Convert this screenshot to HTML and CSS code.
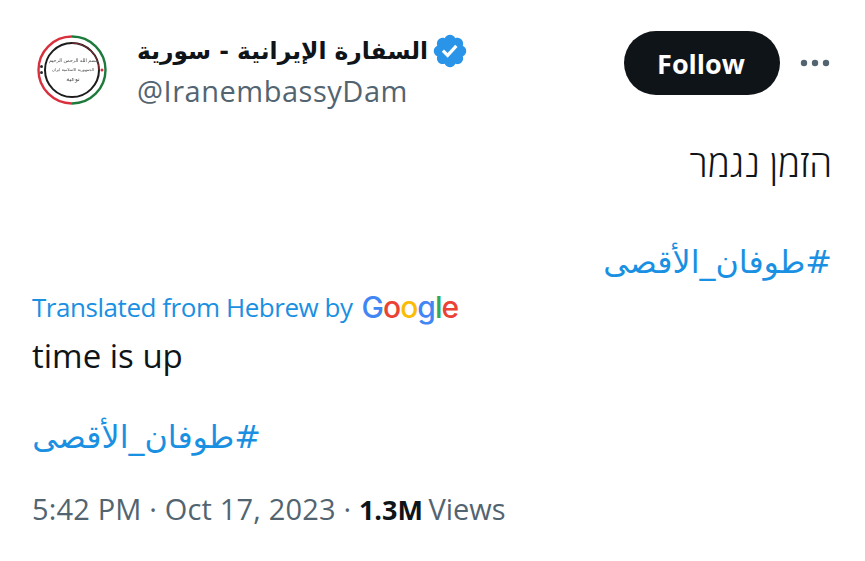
FILE: index.html
```html
<!DOCTYPE html>
<html lang="en">
<head>
<meta charset="utf-8">
<title>Tweet</title>
<link rel="stylesheet" href="styles.css">
</head>
<body>
<main class="tweet">
  <header class="head">
    <svg class="avatar" viewBox="0 0 72 72" aria-hidden="true">
      <circle cx="36" cy="36" r="36" fill="#fff"/>
      <path d="M36 2.500a33.500 33.500 0 0 1 0 67" fill="none" stroke="#1e7a3c" stroke-width="2.400"/>
      <path d="M36 69.500a33.500 33.500 0 0 1 0-67" fill="none" stroke="#d8303c" stroke-width="2.400"/>
      <circle cx="36" cy="36" r="27" fill="none" stroke="#1c1c1c" stroke-width="2"/>
      <path d="M36 9a27 27 0 0 1 27 27" fill="none" stroke="#8a2a30" stroke-width="1"/>
      <g class="seal">
        <text x="37" y="28" font-size="4.800">بسم الله الرحمن الرحيم</text>
        <text x="37" y="37" font-size="4">الجمهورية الاسلامية ايران</text>
        <text x="37" y="47" font-size="6">نوعية</text>
      </g>
      <circle cx="5.500" cy="32.500" r="1.500" fill="#2a2a2a"/>
      <circle cx="5.500" cy="38.500" r="1.500" fill="#2a2a2a"/>
      <circle cx="66" cy="36" r="1.500" fill="#d8303c"/>
    </svg>
    <div class="who">
      <div class="name-row">
        <span class="name" dir="rtl">السفارة الإيرانية - سورية</span>
        <svg class="badge" viewBox="0 0 22 22" aria-hidden="true"><path fill="#2a94e8" d="M20.396 11c-.018-.646-.215-1.275-.57-1.816-.354-.54-.852-.972-1.438-1.246.223-.607.27-1.264.14-1.897-.131-.634-.437-1.218-.882-1.687-.47-.445-1.053-.75-1.687-.882-.633-.13-1.29-.083-1.897.14-.273-.587-.704-1.086-1.245-1.44S11.647 1.62 11 1.604c-.646.017-1.273.213-1.813.568s-.969.854-1.24 1.44c-.608-.223-1.267-.272-1.902-.14-.635.13-1.22.436-1.69.882-.445.47-.749 1.055-.878 1.688-.13.633-.08 1.29.144 1.896-.587.274-1.087.705-1.443 1.245-.356.54-.555 1.17-.574 1.817.02.647.218 1.276.574 1.817.356.54.856.972 1.443 1.245-.224.606-.274 1.263-.144 1.896.13.634.433 1.218.877 1.688.47.443 1.054.747 1.687.878.633.132 1.29.084 1.897-.136.274.586.705 1.084 1.246 1.439.54.354 1.17.551 1.816.569.647-.016 1.276-.213 1.817-.567s.972-.854 1.245-1.44c.604.239 1.266.296 1.903.164.636-.132 1.22-.447 1.68-.907.46-.46.776-1.044.908-1.681s.075-1.299-.165-1.903c.586-.274 1.084-.705 1.439-1.246.354-.54.551-1.17.569-1.816z"/><path fill="#fff" d="M9.662 14.850l-3.429-3.428 1.293-1.302 2.072 2.072 4.400-4.794 1.347 1.246z"/></svg>
      </div>
      <div class="handle">@IranembassyDam</div>
    </div>
    <button class="follow" type="button">Follow</button>
    <svg class="more" viewBox="0 0 30 8" aria-hidden="true"><circle cx="4" cy="4" r="3.200"/><circle cx="15" cy="4" r="3.200"/><circle cx="26" cy="4" r="3.200"/></svg>
  </header>

  <section class="original" dir="rtl">
    <p class="he" lang="he">הזמן נגמר</p>
    <p class="tag" lang="ar">#طوفان_الأقصى</p>
  </section>

  <div class="trans-row">
    <span class="trans">Translated from Hebrew by</span>
    <span class="google"><span class="g-b">G</span><span class="g-r">o</span><span class="g-y">o</span><span class="g-b">g</span><span class="g-g">l</span><span class="g-r">e</span></span>
  </div>
  <p class="body-text">time is up</p>
  <p class="tag tag-en" lang="ar" dir="rtl">#طوفان_الأقصى</p>

  <footer class="meta">
    <span class="date">5:42 PM · Oct 17, 2023 · </span><strong>1.3M</strong><span class="views"> Views</span>
  </footer>
</main>
</body>
</html>
```
FILE: styles.css
```css
* { box-sizing: border-box; }
html, body { margin: 0; padding: 0; background: #fff; }
body { font-family: "Open Sans", "Noto Sans", "DejaVu Sans", sans-serif; color: #0f1419; }
p { margin: 0; }
.tweet { width: 865px; height: 561px; padding: 31px 33px 0 32px; overflow: hidden; }
.head { display: flex; align-items: flex-start; height: 64px; margin-right: 2px; }
.avatar { width: 72px; height: 72px; margin: 3px 0 0 4px; flex: none; filter: blur(0.3px); }
.seal text { font-family: "DejaVu Sans", sans-serif; text-anchor: middle; fill: #444; direction: rtl; }
.who { margin-left: 29px; flex: 1; min-width: 0; }
.name-row { display: flex; align-items: center; height: 40px; }
.name { font-family: "DejaVu Sans", sans-serif; font-weight: 700; font-size: 23.4px; color: #0f1419; white-space: nowrap; }
.badge { width: 38px; height: 38px; margin-left: 3px; flex: none; }
.handle { font-size: 29px; line-height: 36px; letter-spacing: 0.53px; color: #536471; margin-top: 2px; }
.follow { width: 156px; height: 64px; flex: none; border: 0; border-radius: 32px; background: #0f1419; color: #fff; font: 700 27px "Open Sans", sans-serif; padding: 0 2px 0 0; }
.more { width: 30px; height: 8px; margin: 28px 0 0 20px; flex: none; fill: #536471; }
.original { margin-top: 46px; text-align: right; }
.he { font-family: "Open Sans", "Liberation Sans", sans-serif; font-weight: 300; font-size: 36.800px; line-height: 44px; }
.tag { font-family: "DejaVu Sans", sans-serif; font-size: 31.800px; line-height: 44px; color: #1a90e2; }
.original .tag { margin-top: 55px; }
.trans-row { display: flex; align-items: center; gap: 9px; height: 40px; margin-top: 3px; }
.trans { font-size: 26px; letter-spacing: -0.45px; color: #1a90e2; }
.google { font-family: "Inter", sans-serif; font-size: 30px; font-weight: 500; letter-spacing: -1px; line-height: 40px; }
.g-b { color: #4285f4; } .g-r { color: #ea4335; } .g-y { color: #fbbc05; } .g-g { color: #34a853; }
.body-text { font-size: 33px; line-height: 44px; margin-top: 7px; }
.tag-en { text-align: right; width: 229px; margin-top: 37px; }
.meta { font-size: 29px; line-height: 40px; color: #536471; margin-top: 30px; }
.date { letter-spacing: 0.17px; }
.meta strong { color: #0f1419; font-weight: 700; font-size: 27px; }
.views { margin-left: -2px; }
```
